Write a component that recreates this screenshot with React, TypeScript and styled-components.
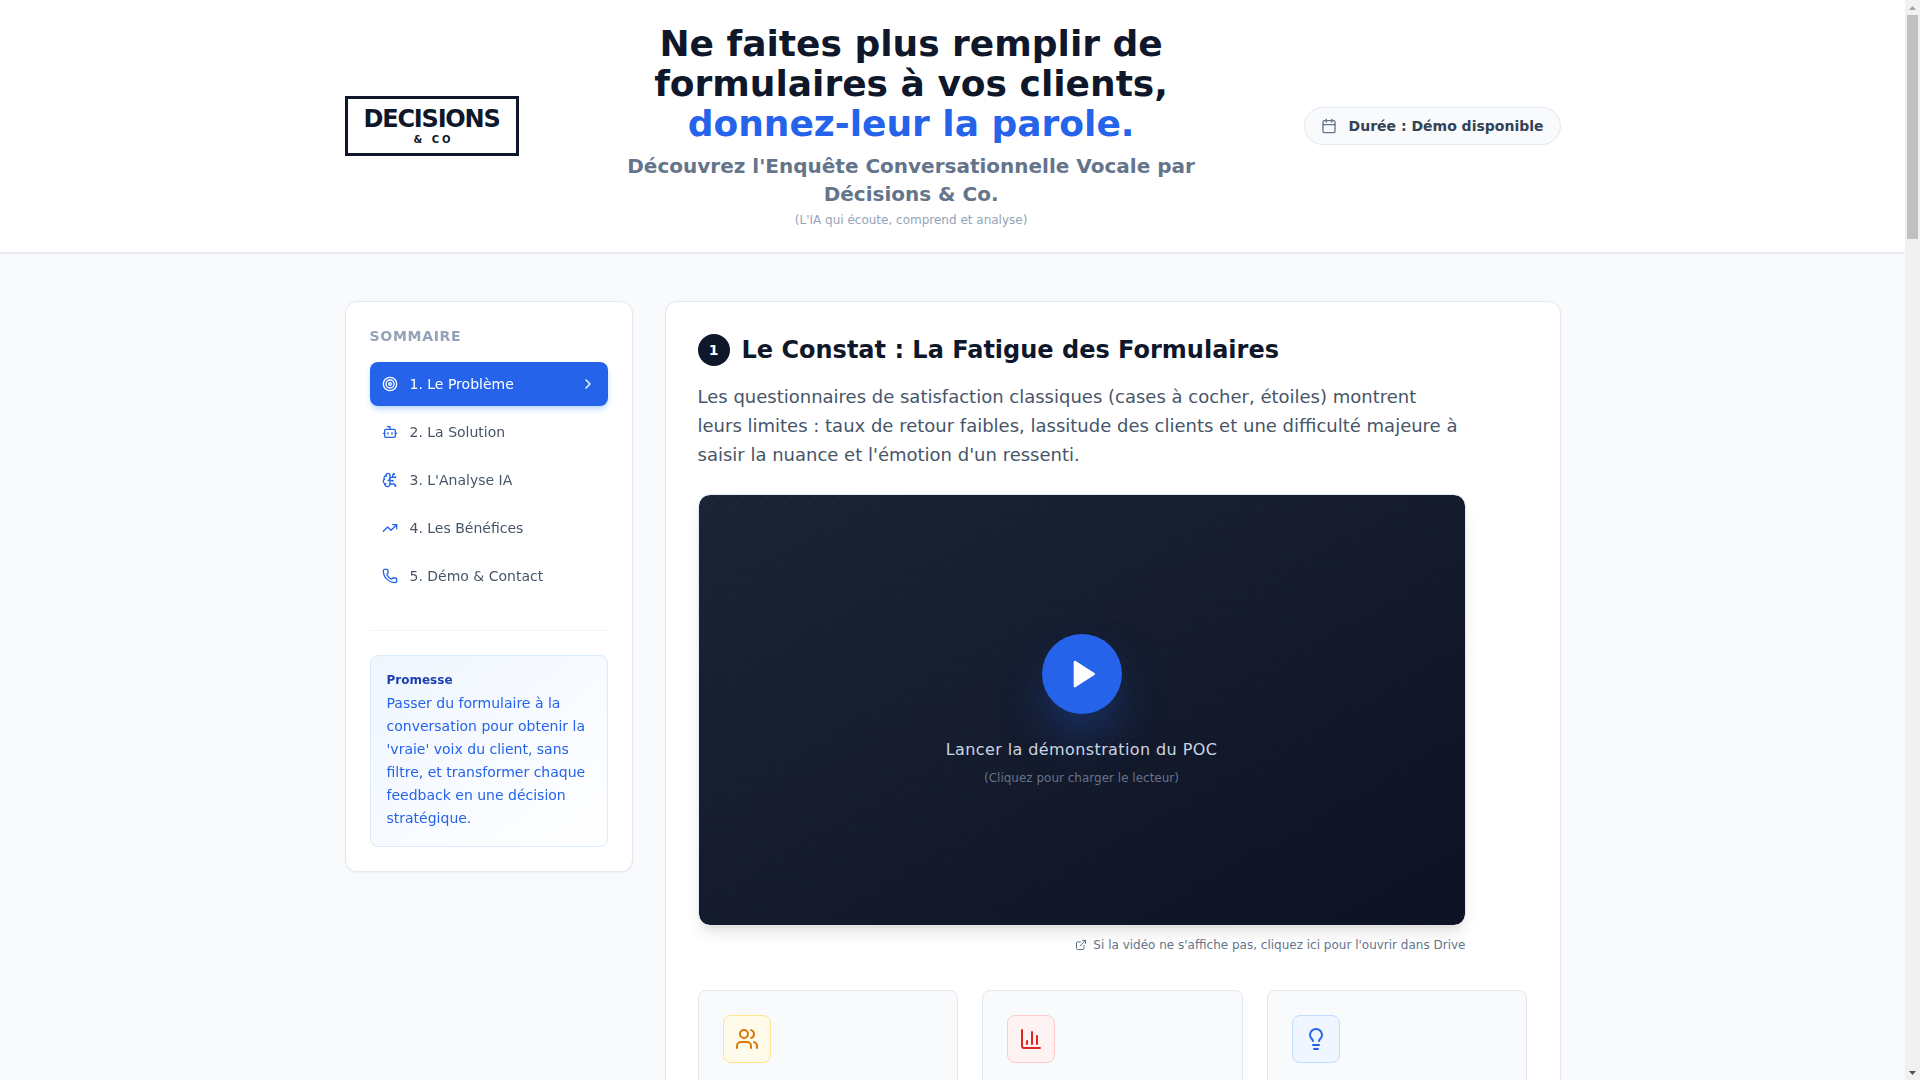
import React, { useEffect, useRef, useState } from 'react';
import styled, { createGlobalStyle, css } from 'styled-components';
import {
  Bot,
  BrainCircuit,
  Calendar,
  ChartColumn,
  ChevronRight,
  ExternalLink,
  Lightbulb,
  Phone,
  Target,
  TrendingUp,
  Users,
} from 'lucide-react';

const GlobalStyle = createGlobalStyle`
  *, *::before, *::after { box-sizing: border-box; }
  html { overflow: hidden; }
  body {
    margin: 0;
    font-family: "DejaVu Sans", sans-serif;
    font-size: 16px;
    line-height: 24px;
    color: #1e293b;
    background: #f8fafc;
  }
  h1, h2, h3, p, ul { margin: 0; padding: 0; }
  button { font: inherit; border: 0; cursor: pointer; }
`;

const Viewport = styled.div`
  display: flex;
  height: 100vh;
`;

const Page = styled.div`
  flex: 1;
  min-width: 0;
  overflow-y: auto;
  scrollbar-width: none;
`;

const Rail = styled.div`
  display: flex;
  flex-direction: column;
  flex: 0 0 15px;
  background: #f1f1f1;
`;

const RailArrow = styled.button`
  display: flex;
  align-items: center;
  justify-content: center;
  width: 15px;
  height: 15px;
  padding: 0;
  background: transparent;
`;

const RailTrack = styled.div`
  flex: 1;
  padding: 0 2px;
`;

const RailThumb = styled.div`
  background: #c1c1c1;
`;

const container = css`
  max-width: 1280px;
  margin: 0 auto;
  padding-left: 32px;
  padding-right: 32px;
`;

const Header = styled.header`
  background: #ffffff;
  border-bottom: 1px solid #e2e8f0;
  box-shadow: 0 1px 2px rgba(0, 0, 0, 0.05);
`;

const HeaderInner = styled.div`
  ${container}
  padding-top: 24px;
  padding-bottom: 24px;
  display: flex;
  align-items: center;
  justify-content: space-between;
`;

const Logo = styled.div`
  display: flex;
  flex-direction: column;
  align-items: center;
  padding: 8px 16px;
  border: 3px solid #0f172a;
  color: #0f172a;
`;

const LogoName = styled.span`
  font-size: 24px;
  line-height: 24px;
  font-weight: 900;
  letter-spacing: -0.05em;
`;

const LogoSuffix = styled.span`
  margin-top: 4px;
  padding-left: 4px;
  font-size: 10px;
  line-height: 10px;
  font-weight: 700;
  letter-spacing: 0.3em;
`;

const Headline = styled.div`
  max-width: 672px;
  text-align: center;
`;

const Title = styled.h1`
  font-size: 36px;
  line-height: 40px;
  font-weight: 800;
  color: #0f172a;
`;

const Accent = styled.span`
  color: #2563eb;
`;

const Subtitle = styled.p`
  margin-top: 8px;
  font-size: 20px;
  line-height: 28px;
  font-weight: 600;
  color: #64748b;
`;

const Note = styled.p`
  margin-top: 4px;
  font-size: 12px;
  line-height: 16px;
  color: #94a3b8;
`;

const Pill = styled.div`
  display: flex;
  align-items: center;
  gap: 12px;
  padding: 8px 16px;
  border: 1px solid #e2e8f0;
  border-radius: 999px;
  background: #f8fafc;
  font-size: 14px;
  line-height: 20px;
  font-weight: 600;
  color: #334155;
  white-space: nowrap;

  svg { color: #64748b; }
`;

const Layout = styled.div`
  ${container}
  padding-top: 48px;
  padding-bottom: 48px;
  display: flex;
  align-items: flex-start;
  gap: 32px;
`;

const Panel = styled.div`
  background: #ffffff;
  border: 1px solid #e2e8f0;
  border-radius: 12px;
  box-shadow: 0 1px 2px rgba(0, 0, 0, 0.05);
`;

const Sidebar = styled(Panel).attrs({ as: 'aside' })`
  flex: 0 0 288px;
  position: sticky;
  top: 32px;
  padding: 24px;
`;

const SidebarTitle = styled.h3`
  margin-bottom: 16px;
  font-size: 14px;
  line-height: 20px;
  font-weight: 700;
  letter-spacing: 0.05em;
  text-transform: uppercase;
  color: #94a3b8;
`;

const Nav = styled.nav`
  display: flex;
  flex-direction: column;
  gap: 4px;
`;

const NavButton = styled.button<{ $active: boolean }>`
  display: flex;
  align-items: center;
  gap: 12px;
  padding: 12px;
  border-radius: 8px;
  font-size: 14px;
  line-height: 20px;
  font-weight: 500;
  text-align: left;
  background: ${(p) => (p.$active ? '#2563eb' : 'transparent')};
  color: ${(p) => (p.$active ? '#ffffff' : '#475569')};
  box-shadow: ${(p) =>
    p.$active ? '0 4px 6px -1px #bfdbfe, 0 2px 4px -2px #bfdbfe' : 'none'};

  svg { color: ${(p) => (p.$active ? '#ffffff' : '#2563eb')}; }
`;

const NavLabel = styled.span`
  flex: 1;
`;

const PromiseSection = styled.div`
  margin-top: 32px;
  padding-top: 24px;
  border-top: 1px solid #f1f5f9;
`;

const PromiseBox = styled.div`
  padding: 16px;
  border: 1px solid #dbeafe;
  border-radius: 8px;
  background: linear-gradient(to bottom right, #eff6ff, #ffffff);
`;

const PromiseTitle = styled.p`
  margin-bottom: 4px;
  font-size: 12px;
  line-height: 16px;
  font-weight: 600;
  color: #1e40af;
`;

const PromiseText = styled.p`
  font-size: 14px;
  line-height: 23px;
  color: #2563eb;
`;

const Content = styled(Panel).attrs({ as: 'main' })`
  flex: 1;
  min-width: 0;
  min-height: 4713px;
  padding: 32px;
`;

const SectionHeading = styled.div`
  display: flex;
  align-items: center;
  gap: 12px;
  margin-bottom: 16px;
`;

const StepNumber = styled.span`
  display: flex;
  align-items: center;
  justify-content: center;
  width: 32px;
  height: 32px;
  border-radius: 50%;
  background: #0f172a;
  color: #ffffff;
  font-size: 14px;
  line-height: 20px;
  font-weight: 700;
`;

const SectionTitle = styled.h2`
  font-size: 24px;
  line-height: 32px;
  font-weight: 700;
  color: #0f172a;
`;

const Measure = styled.div`
  max-width: 768px;
`;

const Lead = styled.p`
  margin-bottom: 25px;
  font-size: 18px;
  line-height: 29px;
  color: #475569;
`;

const Player = styled.button`
  display: flex;
  flex-direction: column;
  align-items: center;
  justify-content: center;
  width: 100%;
  aspect-ratio: 16 / 9;
  padding: 0;
  border: 1px solid #e2e8f0;
  border-radius: 12px;
  background:
    radial-gradient(circle at 3px 2px, rgba(8, 12, 28, 0.16) 1px, transparent 2px) 0 0 / 12px 11px,
    radial-gradient(circle at 9px 8px, rgba(8, 12, 28, 0.16) 1px, transparent 2px) 0 0 / 12px 11px,
    linear-gradient(to bottom right, #1b2537, #0d1224);
  background-clip: padding-box;
  box-shadow: 0 10px 15px -3px rgba(0, 0, 0, 0.1), 0 4px 6px -4px rgba(0, 0, 0, 0.1);
`;

const PlayDisc = styled.span`
  display: flex;
  align-items: center;
  justify-content: center;
  width: 80px;
  height: 80px;
  margin-bottom: 24px;
  padding-left: 2px;
  border-radius: 50%;
  background: #2563eb;
  color: #ffffff;
  box-shadow: 0 25px 50px -12px rgba(37, 99, 235, 0.5);
`;

const PlayerLabel = styled.span`
  font-size: 16px;
  line-height: 24px;
  font-weight: 500;
  letter-spacing: 0.025em;
  color: #cbd5e1;
`;

const PlayerHint = styled.span`
  margin-top: 8px;
  font-size: 12px;
  line-height: 16px;
  color: #64748b;
`;

const FallbackRow = styled.div`
  display: flex;
  justify-content: flex-end;
  margin: 8px 0 32px;
  padding: 3px 0 5px;
`;

const FallbackLink = styled.a`
  display: flex;
  align-items: center;
  gap: 6px;
  font-size: 12px;
  line-height: 16px;
  color: #64748b;
  text-decoration: none;

  &:hover { color: #2563eb; }
`;

const Cards = styled.div`
  display: grid;
  grid-template-columns: repeat(3, 1fr);
  gap: 24px;
`;

const Card = styled.div`
  min-height: 240px;
  padding: 24px;
  border: 1px solid #e2e8f0;
  border-radius: 8px;
  background: #f8fafc;
`;

const tones = {
  amber: { bg: '#fffbeb', line: '#fde68a', ink: '#d97706' },
  red: { bg: '#fef2f2', line: '#fecaca', ink: '#dc2626' },
  blue: { bg: '#eff6ff', line: '#bfdbfe', ink: '#2563eb' },
};

const IconTile = styled.div<{ $tone: keyof typeof tones }>`
  display: flex;
  align-items: center;
  justify-content: center;
  width: 48px;
  height: 48px;
  border: 1px solid ${(p) => tones[p.$tone].line};
  border-radius: 8px;
  background: ${(p) => tones[p.$tone].bg};
  color: ${(p) => tones[p.$tone].ink};
`;

const sections = [
  { label: '1. Le Problème', Icon: Target },
  { label: '2. La Solution', Icon: Bot },
  { label: "3. L'Analyse IA", Icon: BrainCircuit },
  { label: '4. Les Bénéfices', Icon: TrendingUp },
  { label: '5. Démo & Contact', Icon: Phone },
];

const cards = [
  { tone: 'amber' as const, Icon: Users },
  { tone: 'red' as const, Icon: ChartColumn },
  { tone: 'blue' as const, Icon: Lightbulb },
];

function PlayIcon() {
  return (
    <svg
      width="32"
      height="32"
      viewBox="0 0 24 24"
      fill="currentColor"
      stroke="currentColor"
      strokeWidth="2"
      strokeLinecap="round"
      strokeLinejoin="round"
      aria-hidden="true"
    >
      <polygon points="6 3 20 12 6 21 6 3" />
    </svg>
  );
}

export default function App() {
  const [active, setActive] = useState(0);
  const [thumb, setThumb] = useState({ size: 20, start: 0 });
  const pageRef = useRef<HTMLDivElement>(null);

  const syncThumb = () => {
    const page = pageRef.current;
    if (!page) return;
    setThumb({
      size: (page.clientHeight / page.scrollHeight) * 100,
      start: page.scrollTop / page.scrollHeight,
    });
  };

  useEffect(() => {
    syncThumb();
    window.addEventListener('resize', syncThumb);
    return () => window.removeEventListener('resize', syncThumb);
  }, []);

  const scrollBy = (top: number) => pageRef.current?.scrollBy({ top });
  const trackHeight = pageRef.current ? pageRef.current.clientHeight - 30 : 0;

  return (
    <Viewport>
      <GlobalStyle />
      <Page ref={pageRef} onScroll={syncThumb}>
        <Header>
          <HeaderInner>
            <Logo>
              <LogoName>DECISIONS</LogoName>
              <LogoSuffix>&amp; CO</LogoSuffix>
            </Logo>
            <Headline>
              <Title>
                Ne faites plus remplir de formulaires à vos clients,
                <br />
                <Accent>donnez-leur la parole.</Accent>
              </Title>
              <Subtitle>
                Découvrez l'Enquête Conversationnelle Vocale par Décisions &amp; Co.
              </Subtitle>
              <Note>(L'IA qui écoute, comprend et analyse)</Note>
            </Headline>
            <Pill>
              <Calendar size={16} />
              <span>Durée : Démo disponible</span>
            </Pill>
          </HeaderInner>
        </Header>

        <Layout>
          <Sidebar>
            <SidebarTitle>Sommaire</SidebarTitle>
            <Nav>
              {sections.map(({ label, Icon }, i) => (
                <NavButton
                  key={label}
                  type="button"
                  $active={i === active}
                  onClick={() => setActive(i)}
                >
                  <Icon size={16} />
                  <NavLabel>{label}</NavLabel>
                  {i === active && <ChevronRight size={16} />}
                </NavButton>
              ))}
            </Nav>
            <PromiseSection>
              <PromiseBox>
                <PromiseTitle>Promesse</PromiseTitle>
                <PromiseText>
                  Passer du formulaire à la conversation pour obtenir la 'vraie' voix du client,
                  sans filtre, et transformer chaque feedback en une décision stratégique.
                </PromiseText>
              </PromiseBox>
            </PromiseSection>
          </Sidebar>

          <Content>
            <SectionHeading>
              <StepNumber>1</StepNumber>
              <SectionTitle>Le Constat : La Fatigue des Formulaires</SectionTitle>
            </SectionHeading>
            <Measure>
              <Lead>
                Les questionnaires de satisfaction classiques (cases à cocher, étoiles) montrent
                leurs limites : taux de retour faibles, lassitude des clients et une difficulté
                majeure à saisir la nuance et l'émotion d'un ressenti.
              </Lead>
              <Player type="button">
                <PlayDisc>
                  <PlayIcon />
                </PlayDisc>
                <PlayerLabel>Lancer la démonstration du POC</PlayerLabel>
                <PlayerHint>(Cliquez pour charger le lecteur)</PlayerHint>
              </Player>
              <FallbackRow>
                <FallbackLink href="#drive">
                  <ExternalLink size={12} />
                  Si la vidéo ne s'affiche pas, cliquez ici pour l'ouvrir dans Drive
                </FallbackLink>
              </FallbackRow>
            </Measure>
            <Cards>
              {cards.map(({ tone, Icon }) => (
                <Card key={tone}>
                  <IconTile $tone={tone}>
                    <Icon size={24} />
                  </IconTile>
                </Card>
              ))}
            </Cards>
          </Content>
        </Layout>
      </Page>

      <Rail aria-hidden="true">
        <RailArrow type="button" tabIndex={-1} onClick={() => scrollBy(-40)}>
          <svg width="7" height="4" viewBox="0 0 7 4" fill="#a3a3a3">
            <path d="M3.5 0 7 4H0z" />
          </svg>
        </RailArrow>
        <RailTrack>
          <RailThumb
            style={{
              height: `${thumb.size}%`,
              transform: `translateY(${thumb.start * trackHeight}px)`,
            }}
          />
        </RailTrack>
        <RailArrow type="button" tabIndex={-1} onClick={() => scrollBy(40)}>
          <svg width="7" height="4" viewBox="0 0 7 4" fill="#505050">
            <path d="M0 0h7L3.5 4z" />
          </svg>
        </RailArrow>
      </Rail>
    </Viewport>
  );
}
